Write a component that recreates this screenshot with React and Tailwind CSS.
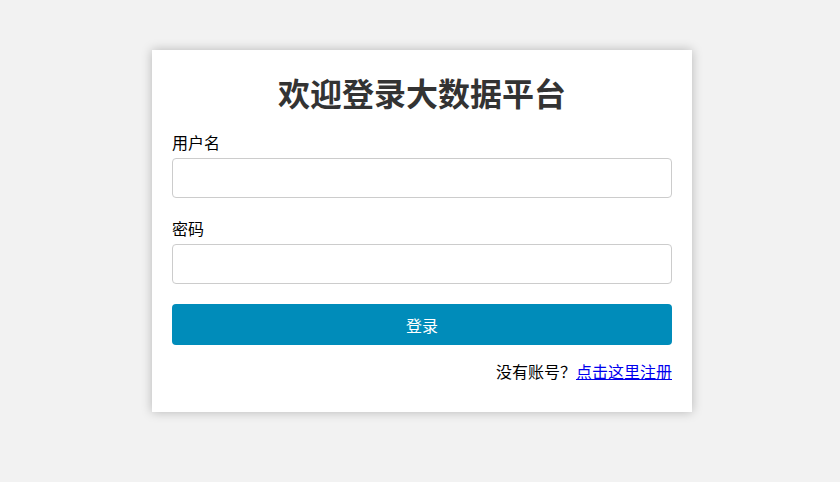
import React from 'react';

const font = { fontFamily: '"Noto Sans CJK SC", "Noto Sans", sans-serif' };

const App = () => {
  return (
    <div className="min-h-[482px] bg-[#f2f2f2] flex justify-center pl-[4px] pt-[50px]" style={font}>
      <div className="w-[540px] h-fit bg-white px-[20px] pt-[20px] pb-[30px] shadow-[0_0_10px_rgba(0,0,0,0.25)]">
        <h1 className="text-[32px] leading-[44px] font-bold text-[#333] text-center mb-[18px]">
          欢迎登录大数据平台
        </h1>

        <label className="block text-[16px] leading-[20px] text-black mb-[6px]">用户名</label>
        <input
          type="text"
          className="block w-full h-[40px] border border-[#ccc] rounded-[4px] px-3 outline-none"
        />

        <label className="block text-[16px] leading-[20px] text-black mt-[20px] mb-[6px]">密码</label>
        <input
          type="password"
          className="block w-full h-[40px] border border-[#ccc] rounded-[4px] px-3 outline-none"
        />

        <button className="block w-full h-[41px] mt-[20px] bg-[#008cba] text-white text-[16px] rounded-[4px]">
          登录
        </button>

        <p className="mt-[15px] text-right text-[16px] leading-[22px] text-black">
          没有账号？<a href="#" className="text-[#0000ee] underline">点击这里注册</a>
        </p>
      </div>
    </div>
  );
};

export default App;
